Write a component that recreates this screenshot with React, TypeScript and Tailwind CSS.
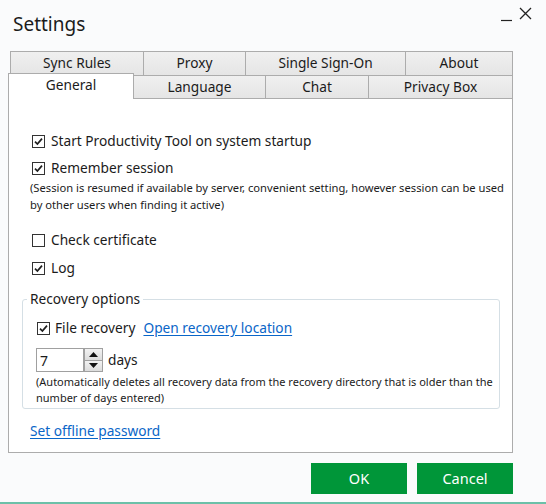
import React from "react";

type Tab = { label: string; width: string };

const backTabs: Tab[] = [
  { label: "Sync Rules", width: "w-[134px]" },
  { label: "Proxy", width: "w-[103px]" },
  { label: "Single Sign-On", width: "w-[161px]" },
  { label: "About", width: "w-[108px]" },
];

const frontTabs: Tab[] = [
  { label: "Language", width: "w-[133px]" },
  { label: "Chat", width: "w-[104px]" },
  { label: "Privacy Box", width: "w-[145px]" },
];

function CheckBox({ checked }: { checked?: boolean }) {
  return (
    <span className="flex h-[13px] w-[13px] shrink-0 items-center justify-center border border-[#333] bg-white">
      {checked ? (
        <svg width="9" height="9" viewBox="0 0 9 9" fill="none">
          <path d="M1 4.6 L3.4 7 L8 1.6" stroke="#1f1f1f" strokeWidth="1.7" />
        </svg>
      ) : null}
    </span>
  );
}

function Option({ label, checked }: { label: string; checked?: boolean }) {
  return (
    <label className="flex h-[20px] items-center gap-[6px] pl-[10px] text-[13.7px]">
      <CheckBox checked={checked} />
      <span>{label}</span>
    </label>
  );
}

function Spinner() {
  return (
    <div className="flex h-[24px] items-stretch">
      <div className="flex w-[48px] items-center border border-[#a0a0a0] bg-white pl-[3px] text-[14px]">
        7
      </div>
      <div className="flex w-[19px] flex-col">
        <div className="flex flex-1 items-center justify-center border border-[#a0a0a0] bg-gradient-to-b from-[#f2f2f2] to-[#dcdcdc]">
          <svg width="9" height="5" viewBox="0 0 9 5">
            <path d="M0 5 L4.5 0 L9 5 Z" fill="#111" />
          </svg>
        </div>
        <div className="-mt-px flex flex-1 items-center justify-center border border-[#a0a0a0] bg-gradient-to-b from-[#f2f2f2] to-[#dcdcdc]">
          <svg width="9" height="5" viewBox="0 0 9 5">
            <path d="M0 0 L9 0 L4.5 5 Z" fill="#111" />
          </svg>
        </div>
      </div>
      <span className="ml-[5px] self-center text-[13.7px]">days</span>
    </div>
  );
}

export default function App() {
  return (
    <div className="flex h-[504px] w-[546px] flex-col overflow-hidden border-b-2 border-[#6cc0a8] bg-[#fafbfc] font-['Noto_Sans',sans-serif] text-[#1b1b1b]">
      <div className="flex h-[51px] items-start justify-between">
        <h1 className="pl-[13px] pt-[10px] text-[19px] leading-[28px]">Settings</h1>
        <div className="flex items-start gap-[7px] pr-[14px] pt-[7px]">
          <svg width="11" height="15" viewBox="0 0 11 15">
            <path d="M0 13.5 H11" stroke="#222" strokeWidth="1.2" />
          </svg>
          <svg width="13" height="13" viewBox="0 0 13 13">
            <path d="M1 1 L12 12 M12 1 L1 12" stroke="#222" strokeWidth="1.3" />
          </svg>
        </div>
      </div>

      <div className="ml-[10px] flex h-[24px]">
        {backTabs.map((t, i) => (
          <div
            key={t.label}
            className={`${t.width} ${i > 0 ? "-ml-px" : ""} flex items-center justify-center border-x border-t border-[#acacac] bg-gradient-to-b from-[#f0f0f0] to-[#e5e5e5] text-[13.7px]`}
          >
            {t.label}
          </div>
        ))}
      </div>

      <div className="ml-[8px] flex h-[23px] items-end">
        <div className="relative z-10 -mb-px flex h-[26px] w-[126px] items-start justify-center border-x border-t border-[#acacac] bg-white pt-[1px] text-[13.7px]">
          General
        </div>
        {frontTabs.map((t) => (
          <div
            key={t.label}
            className={`${t.width} -ml-px flex h-[23px] items-center justify-center border-x border-t border-[#acacac] bg-gradient-to-b from-[#f0f0f0] to-[#e5e5e5] text-[13.7px]`}
          >
            {t.label}
          </div>
        ))}
      </div>

      <div className="ml-[8px] flex h-[355px] w-[505px] flex-col border border-[#acacac] bg-white px-[13px] pt-[32px]">
        <Option label="Start Productivity Tool on system startup" checked />
        <div className="mt-[7px]">
          <Option label="Remember session" checked />
        </div>
        <p className="-mr-[12px] ml-[8px] mt-px text-[11.2px] leading-[17px]">
          (Session is resumed if available by server, convenient setting, however session can be used by other users when finding it active)
        </p>
        <div className="mt-[17px]">
          <Option label="Check certificate" />
        </div>
        <div className="mt-[8px]">
          <Option label="Log" checked />
        </div>

        <fieldset className="mt-[11px] w-[478px] rounded-[3px] border border-[#d5dfe5] pb-[2px] pl-[14px]">
          <legend className="-ml-[10px] px-[3px] text-[13.7px] leading-[20px]">Recovery options</legend>
          <div className="mt-[9px] flex h-[20px] items-center text-[13.7px]">
            <CheckBox checked />
            <span className="ml-[5px]">File recovery</span>
            <a href="#" className="ml-[8px] text-[#0a66c8] underline underline-offset-2">
              Open recovery location
            </a>
          </div>
          <div className="-ml-px mt-[10px]">
            <Spinner />
          </div>
          <p className="-ml-px -mr-[4px] mt-[2px] text-[11px] leading-[16px]">
            (Automatically deletes all recovery data from the recovery directory that is older than the number of days entered)
          </p>
        </fieldset>

        <a href="#" className="ml-[8px] mt-[12px] flex h-[20px] items-center self-start text-[13.7px] text-[#0a66c8] underline underline-offset-2">
          Set offline password
        </a>
      </div>

      <div className="mt-[10px] flex justify-end gap-[10px] pr-[33px]">
        <button className="h-[31px] w-[96px] bg-[#009639] text-[14.5px] text-white">OK</button>
        <button className="h-[31px] w-[96px] bg-[#009639] text-[14.5px] text-white">Cancel</button>
      </div>
    </div>
  );
}
